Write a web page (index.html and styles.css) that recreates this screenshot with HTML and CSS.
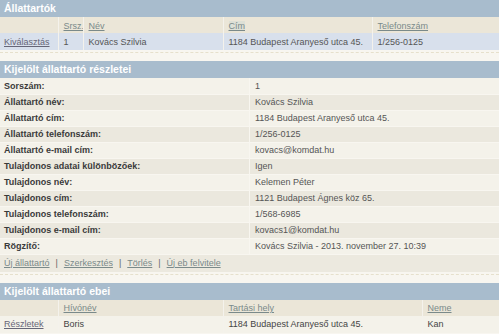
FILE: index.html
```html
<!DOCTYPE html>
<html lang="hu">
<head>
<meta charset="utf-8">
<link rel="stylesheet" href="styles.css">
</head>
<body>
<section class="panel">
  <div class="bar">Állattartók</div>
  <table class="grid owners">
    <colgroup><col class="c1"><col class="c2"><col class="c3"><col class="c4"><col></colgroup>
    <tr class="head"><th></th><th><a>Srsz.</a></th><th><a>Név</a></th><th><a class="sorted">Cím</a></th><th><a>Telefonszám</a></th></tr>
    <tr class="sel"><td><a>Kiválasztás</a></td><td>1</td><td>Kovács Szilvia</td><td>1184 Budapest Aranyeső utca 45.</td><td>1/256-0125</td></tr>
  </table>
</section>
<div class="sep"></div>
<section class="panel">
  <div class="bar">Kijelölt állattartó részletei</div>
  <table class="details">
    <tr><th>Sorszám:</th><td>1</td></tr>
    <tr><th>Állattartó név:</th><td>Kovács Szilvia</td></tr>
    <tr><th>Állattartó cím:</th><td>1184 Budapest Aranyeső utca 45.</td></tr>
    <tr><th>Állattartó telefonszám:</th><td>1/256-0125</td></tr>
    <tr><th>Állattartó e-mail cím:</th><td>kovacs@komdat.hu</td></tr>
    <tr><th>Tulajdonos adatai különbözőek:</th><td>Igen</td></tr>
    <tr><th>Tulajdonos név:</th><td>Kelemen Péter</td></tr>
    <tr><th>Tulajdonos cím:</th><td>1121 Budapest Ágnes köz 65.</td></tr>
    <tr><th>Tulajdonos telefonszám:</th><td>1/568-6985</td></tr>
    <tr><th>Tulajdonos e-mail cím:</th><td>kovacs1@komdat.hu</td></tr>
    <tr><th>Rögzítő:</th><td>Kovács Szilvia - 2013. november 27. 10:39</td></tr>
  </table>
  <div class="actions"><a>Új állattartó</a><span class="pipe">|</span><a>Szerkesztés</a><span class="pipe">|</span><a>Törlés</a><span class="pipe">|</span><a>Új eb felvitele</a></div>
</section>
<div class="sep"></div>
<section class="panel">
  <div class="bar">Kijelölt állattartó ebei</div>
  <table class="grid dogs">
    <colgroup><col class="c1"><col class="d2"><col class="d3"><col></colgroup>
    <tr class="head"><th></th><th><a>Hívónév</a></th><th><a>Tartási hely</a></th><th><a>Neme</a></th></tr>
    <tr class="row"><td><a>Részletek</a></td><td>Boris</td><td>1184 Budapest Aranyeső utca 45.</td><td>Kan</td></tr>
  </table>
</section>
</body>
</html>
```
FILE: styles.css
```css
html, body {
  margin: 0;
  padding: 0;
  background: #f8f6f0;
}
body {
  width: 499px;
  font-family: "Liberation Sans", Arial, sans-serif;
  font-size: 9px;
  color: #555;
}
a {
  color: #667;
  text-decoration: underline;
}
.bar {
  height: 17px;
  line-height: 17px;
  background: #a8bccd;
  color: #fff;
  font-weight: bold;
  font-size: 10.5px;
  padding-left: 4px;
}
table {
  width: 100%;
  border-collapse: collapse;
  table-layout: fixed;
}
.grid .c1 { width: 58px; }
.grid .c2 { width: 25px; }
.grid .c3 { width: 140px; }
.grid .c4 { width: 149px; }
.grid .d2 { width: 165px; }
.grid .d3 { width: 199px; }
.grid th, .grid td {
  text-align: left;
  font-weight: normal;
  padding: 0 0 0 5px;
  white-space: nowrap;
  overflow: hidden;
  border-left: 1px solid #f4f2ec;
}
.grid th:first-child, .grid td:first-child {
  border-left: none;
  padding-left: 4px;
}
.grid .head {
  height: 16px;
  background: #ebe6d8;
}
.grid .head th { padding-top: 1px; }
.grid .head a { color: #7a8a8a; }
.grid .sorted { background: #dde0d6; }
.owners .sel {
  height: 17px;
  background: #d8e0ec;
}
.dogs .row {
  height: 17px;
  background: #f4f2ea;
}
.dogs .row td { color: #444; }
.sep {
  height: 9px;
  background: #f8f6f0;
  border-top: 1px dashed #e6e0cc;
  box-sizing: border-box;
  margin-top: 2px;
}
.details tr {
  height: 16px;
  background: #f4f2ea;
}
.details tr:nth-child(even) {
  background: #ebe8de;
}
.details th {
  width: 244px;
  text-align: left;
  font-weight: bold;
  color: #3a3a3a;
  padding-left: 4px;
  border-bottom: 1px solid #f8f6f0;
}
.details td {
  padding-left: 5px;
  color: #555;
  border-bottom: 1px solid #f8f6f0;
  border-left: 1px solid #f8f6f0;
}
.actions {
  height: 17px;
  line-height: 17px;
  background: #ece9df;
  padding-left: 4px;
  display: flex;
}
.actions a { color: #7a8a8a; }
.pipe {
  color: #666;
  margin: 0 6px;
}
```
